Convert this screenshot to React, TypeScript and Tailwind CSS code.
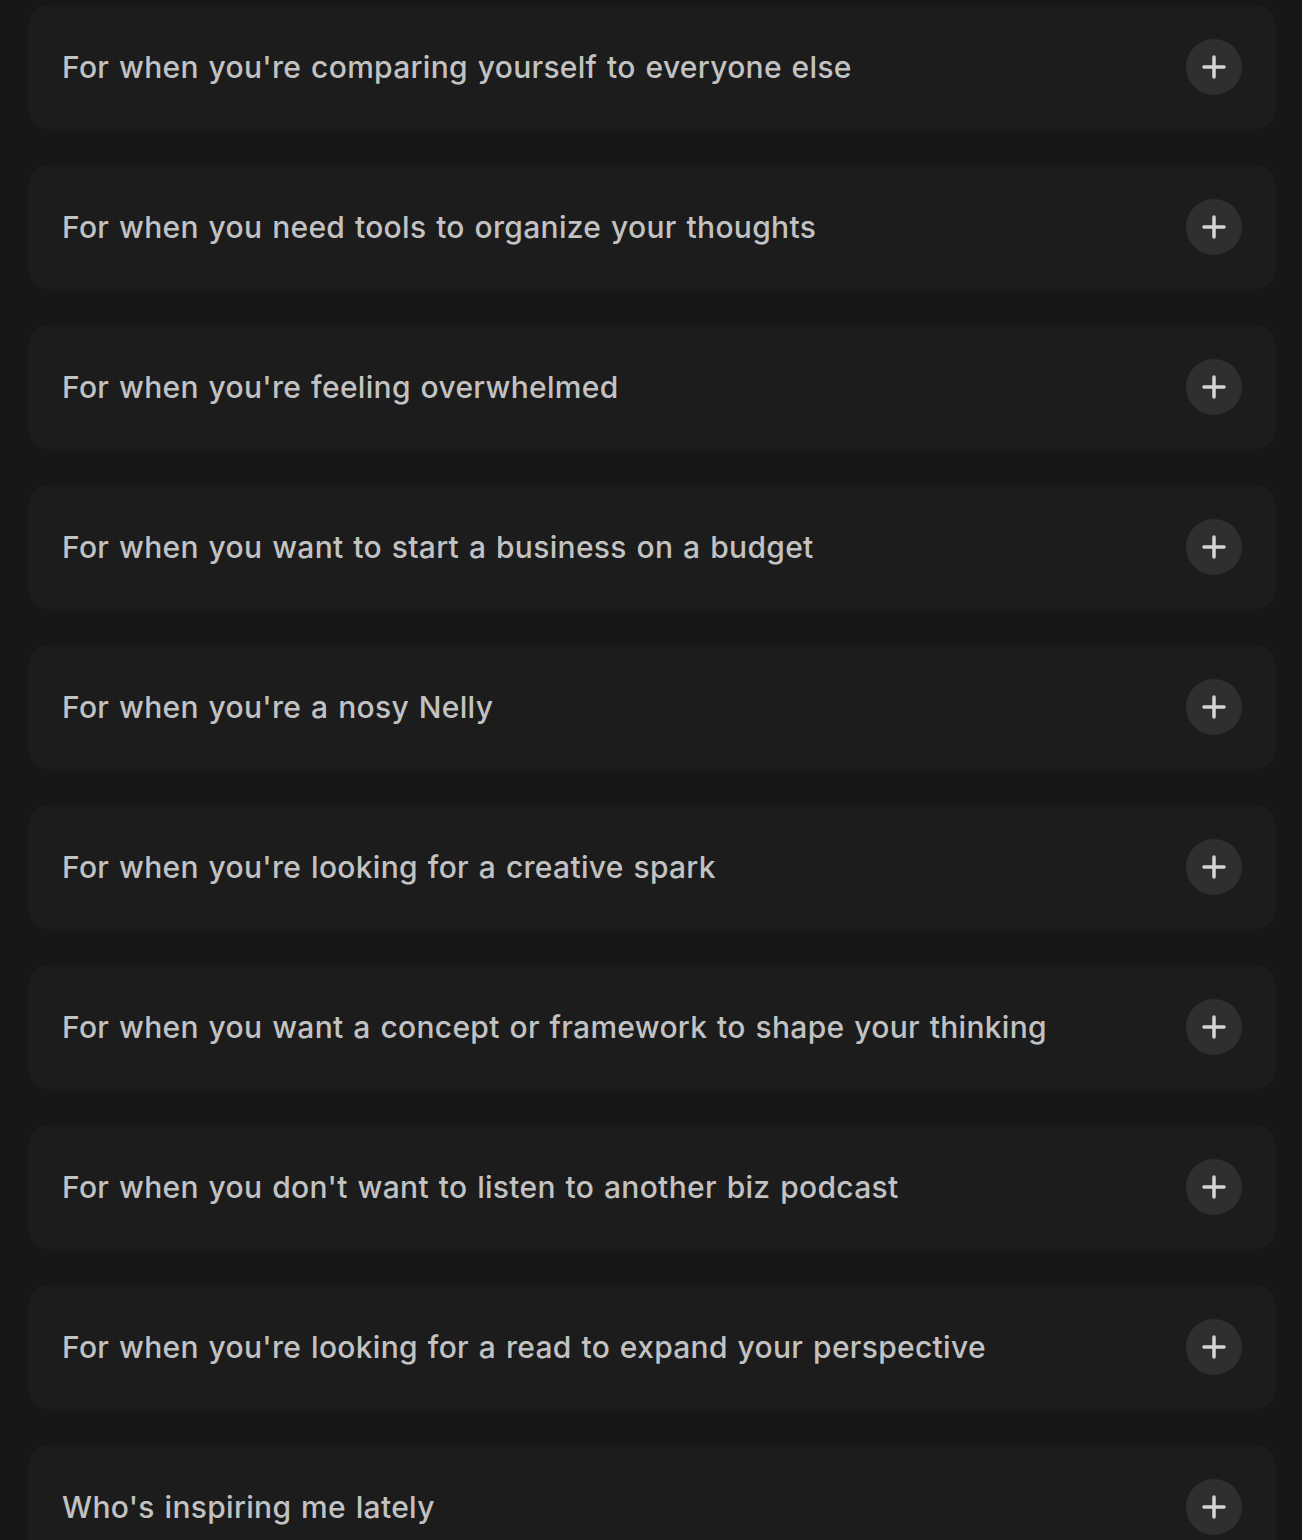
const items = [
    "For when you're comparing yourself to everyone else",
    "For when you need tools to organize your thoughts",
    "For when you're feeling overwhelmed",
    "For when you want to start a business on a budget",
    "For when you're a nosy Nelly",
    "For when you're looking for a creative spark",
    "For when you want a concept or framework to shape your thinking",
    "For when you don't want to listen to another biz podcast",
    "For when you're looking for a read to expand your perspective",
    "Who's inspiring me lately",
];

function PlusButton() {
    return (
        <div className="flex h-14 w-14 shrink-0 items-center justify-center rounded-full bg-[#2f2f2f]">
            <svg width="24" height="24" viewBox="0 0 24 24" fill="none">
                <path d="M12 2v20M2 12h20" stroke="#d4d4d4" strokeWidth="3.5" strokeLinecap="round" />
            </svg>
        </div>
    );
}

export default function App() {
    return (
        <div className="min-h-screen bg-[#171717] pl-7 pr-[26px] pt-[5px] font-['Inter',sans-serif]">
            <div className="flex flex-col gap-9">
                {items.map((label) => (
                    <div
                        key={label}
                        className="flex h-[124px] items-center justify-between rounded-[20px] bg-[#1c1c1c] pl-[34px] pr-[34px]"
                    >
                        <span className="text-[30px] font-medium leading-none tracking-[0.3px] [word-spacing:1.5px] text-[#c2c2c2]">
                            {label}
                        </span>
                        <PlusButton />
                    </div>
                ))}
            </div>
        </div>
    );
}
